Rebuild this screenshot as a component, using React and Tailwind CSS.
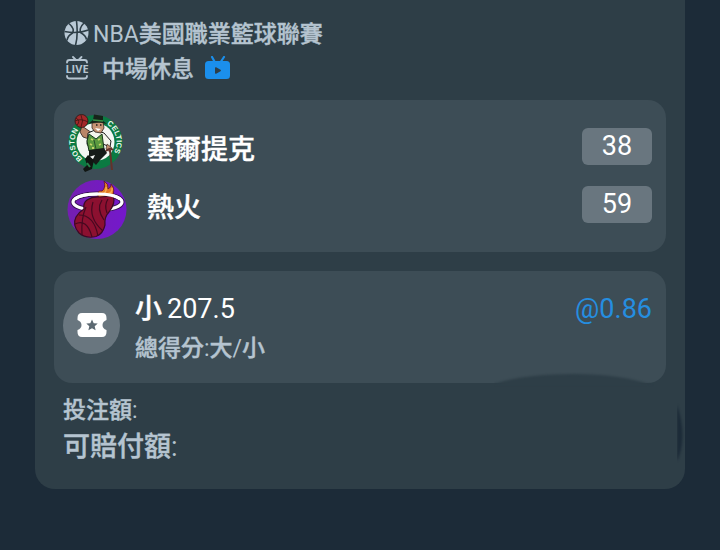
import React from "react";

function BasketballIcon() {
  return (
    <svg viewBox="0 0 26 26" className="size-[26px] shrink-0" aria-hidden="true">
      <circle cx="12.500" cy="12" r="12" fill="#b9c9d6" />
      <g fill="none" stroke="#2e3e47" strokeWidth="1.600">
        <path d="M0.500 10.500C8 12 18 11.500 24.500 9" />
        <path d="M12.500 0C13.500 8 13.500 17 11.500 24.500" />
        <path d="M5 2.500C9.500 6.500 10 9.500 8.500 12C6 13.500 3.500 15.500 3 19.500" />
        <path d="M20 2C16.500 5.500 15.500 8.500 16.500 11.500C20 13.500 22 15.500 22.500 18.500" />
      </g>
    </svg>
  );
}

function LiveIcon() {
  return (
    <svg viewBox="0 0 26 26" className="size-[26px] shrink-0" aria-hidden="true">
      <g fill="none" stroke="#b5c4d0" strokeWidth="1.800" strokeLinecap="round">
        <path d="M3 6.500V6.500Q3 4 5.500 4H20.500Q23 4 23 6.500V6.500" />
        <path d="M3 20V20Q3 22.500 5.500 22.500H20.500Q23 22.500 23 20V20" />
        <path d="M9 1L11.500 3.500M17.500 1L15 3.500" />
      </g>
      <text x="13" y="17" textAnchor="middle" fontSize="11" fontWeight="700" fill="#b5c4d0" className="font-['Open_Sans',sans-serif]">LIVE</text>
    </svg>
  );
}

function TvIcon() {
  return (
    <svg viewBox="0 0 26 26" className="size-[26px] shrink-0" aria-hidden="true">
      <rect x="0" y="5" width="25" height="18" rx="3.500" fill="#1b8fec" />
      <path d="M7 1L9.500 5.500M19 1L16 5.500" stroke="#1b8fec" strokeWidth="2.200" strokeLinecap="round" />
      <path d="M10 12.200Q10 10.800 11.100 11.300L15.500 13.700Q16.500 14.500 15.500 15.300L11.100 17.700Q10 18.200 10 16.800Z" fill="#2e3e47" />
    </svg>
  );
}

function CelticsLogo() {
  return (
    <svg viewBox="0 0 60 60" className="size-[60px] shrink-0" role="img" aria-label="Celtics">
      <defs>
        <path id="arcLeft" d="M16.500 46.200A21 21 0 0 1 16.500 11.800" />
        <path id="arcRight" d="M39 10.800A21 21 0 0 1 44 43.200" />
      </defs>
      <circle cx="28.500" cy="29" r="27" fill="#0b7a42" />
      <circle cx="28.500" cy="29" r="19" fill="#f4f7f4" />
      <g fill="#eef6f0" fontSize="7.500" fontWeight="700" className="font-['Liberation_Sans',sans-serif]">
        <text><textPath href="#arcLeft" startOffset="1">BOSTON</textPath></text>
        <text><textPath href="#arcRight" startOffset="1">CELTICS</textPath></text>
      </g>
      <g transform="translate(-2 0)">
        <path d="M17 13L15 19L18 24L24 26L27 20Z" fill="#b98568" stroke="#2b201b" strokeWidth="0.800" />
        <circle cx="16.500" cy="8" r="6.500" fill="#a3282a" stroke="#2d1614" strokeWidth="0.800" />
        <path d="M10 8Q16 5 23 9M16 2Q19 8 16 14M11 5Q16 8 12 12" fill="none" stroke="#3b1513" strokeWidth="0.800" />
        <path d="M23 20L30 17L39 20L46 28L45 34L38 31V37L27 39L22 31Z" fill="#f5f5ec" stroke="#202020" />
        <path d="M24 21L31 26L37 21L39 36L24 38L22 28Z" fill="#5b9a3f" stroke="#17371e" />
        <path d="M26 26l2 1M33 27l2-1M25 31l2 1M34 32l2-1M27 35h2" stroke="#c5d367" strokeWidth="1.800" />
        <path d="M29 27L31 36" stroke="#254f2a" />
        <path d="M24 37L39 35L42 40L36 46L31 52L27 48L30 42L24 44Z" fill="#151b18" />
        <path d="M23 42L29 47L27 56L20 59L18 56L22 52L20 46Z" fill="#101612" />
        <path d="M22 50L25 54" stroke="#27824a" strokeWidth="2" />
        <path d="M27 10L38 9L39 15L36 20L30 19L27 15Z" fill="#c79474" stroke="#33251c" strokeWidth="0.800" />
        <path d="M23 11L28 7L29 1.500L38 3L38 8L42 11L33 9Z" fill="#17231a" />
        <path d="M28 7L38 8" stroke="#3b8f45" strokeWidth="1.500" />
        <path d="M30 15L36 16L33 18Z" fill="#fff" />
        <path d="M31 12h1.500M35 12h1.500" stroke="#201b18" strokeWidth="1.500" />
        <path d="M42 31L47 35L45 39L41 36Z" fill="#c28c6d" stroke="#2b201b" strokeWidth="0.600" />
        <path d="M41 38Q45 34 48 37M45 37L47 57" fill="none" stroke="#64322a" strokeWidth="2" />
      </g>
    </svg>
  );
}

function HeatLogo() {
  return (
    <svg viewBox="0 0 60 60" className="size-[60px] shrink-0" role="img" aria-label="Heat">
      <defs>
        <linearGradient id="heatDisc" x1="0" x2="1">
          <stop offset="0" stopColor="#741fb0" />
          <stop offset="1" stopColor="#7418cc" />
        </linearGradient>
      </defs>
      <circle cx="30" cy="29.500" r="29.500" fill="url(#heatDisc)" />
      <ellipse cx="30.500" cy="22" rx="24.500" ry="8" fill="none" stroke="#35104c" strokeWidth="5" />
      <ellipse cx="30.500" cy="22" rx="24.500" ry="8" fill="none" stroke="#fff" strokeWidth="3.200" />
      <path d="M31 16Q30 10 35 11Q39 8 37 1Q42 4 41 9Q45 7 44 4Q49 10 45 16L43 22H34Z" fill="#e57a25" stroke="#5a1428" strokeWidth="0.800" />
      <path d="M36 14Q40 12 39 7M40 14Q46 13 45 8" fill="none" stroke="#f6b14c" strokeWidth="1.500" />
      <path d="M20 20Q26 16 33 17L46 16Q49 23 42 32Q37 37 38 45Q36 54 29 56.500Q19 59 12 53Q5 45 9 37Q12 32 17 29Q16 23 20 20Z" fill="#8c1030" stroke="#3b0a24" strokeWidth="1.200" />
      <g fill="none" stroke="#450920" strokeWidth="1.200">
        <path d="M8 44Q20 38 25 57" />
        <path d="M12 35Q27 35 31 56" />
        <path d="M19 27Q14 38 15 55" />
        <path d="M26 22Q21 38 36 51" />
        <path d="M35 20Q29 29 37 40" />
        <path d="M41 19Q37 25 40 33" />
      </g>
      <path d="M8 19Q14 14 30.500 14Q47 14 53 19" fill="none" stroke="#fff" strokeWidth="3.200" />
    </svg>
  );
}

function TicketIcon() {
  return (
    <span className="flex size-[57px] shrink-0 items-center justify-center rounded-full bg-[#69767f]">
      <svg viewBox="0 0 30 26" className="h-[26px] w-[30px]" aria-hidden="true">
        <path d="M5 1H25Q29.500 1 29.500 6V8Q25.500 9.500 25.500 13Q25.500 16.500 29.500 18V20Q29.500 25 25 25H5Q0.500 25 0.500 20V18Q4.500 16.500 4.500 13Q4.500 9.500 0.500 8V6Q0.500 1 5 1Z" fill="#fff" />
        <path d="M15 7.500L16.700 11.200L20.700 11.600L17.700 14.300L18.600 18.300L15 16.200L11.400 18.300L12.300 14.300L9.300 11.600L13.300 11.200Z" fill="#5c6972" />
      </svg>
    </span>
  );
}

function Han({ children }) {
  return <span className="font-medium [-webkit-text-stroke:0.4px]">{children}</span>;
}

const teams = [
  { name: "塞爾提克", score: 38, Logo: CelticsLogo },
  { name: "熱火", score: 59, Logo: HeatLogo },
];

export default function App() {
  return (
    <main className="min-h-screen bg-[#1c2b38] px-[35px] font-['Roboto','Noto_Sans_CJK_TC',sans-serif] text-[#b5c4d0]">
      <article className="relative rounded-b-[20px] bg-[#2e3e47] px-[19px] pt-4 pb-6">
        <header className="px-[10px] text-[23px]">
          <h1 className="flex h-[35px] items-center gap-[3px]">
            <BasketballIcon />
            <span className="pt-1">NBA<Han>美國職業籃球聯賽</Han></span>
          </h1>
          <div className="flex h-[35px] items-center">
            <LiveIcon />
            <span className="mr-[11px] ml-3 pt-1"><Han>中場休息</Han></span>
            <TvIcon />
          </div>
        </header>

        <section className="mt-[14px] flex h-[152px] items-center rounded-[18px] bg-[#3d4d56] pr-[14px] pl-[13px] text-[27px] text-white">
          <div className="flex flex-col gap-[7px]">
            {teams.map(({ name, Logo }) => <Logo key={name} />)}
          </div>
          <ul className="ml-5 flex-1 pb-[2px]">
            {teams.map(({ name, score }) => (
              <li key={name} className="flex h-[58px] items-center">
                <span className="flex-1 pt-2 leading-9"><Han>{name}</Han></span>
                <span className="flex h-[37px] w-[70px] items-center justify-center rounded-md bg-[#69767f]">{score}</span>
              </li>
            ))}
          </ul>
        </section>

        <section className="relative mt-[19px] flex h-28 items-center rounded-[18px] bg-[#3d4d56] pr-[14px] pb-1 pl-[9px]">
          <TicketIcon />
          <div className="ml-[15px] flex-1 pt-1">
            <div className="flex h-10 items-center justify-between pt-1 text-[27px]">
              <span className="flex items-center gap-[5px] text-white"><Han>小</Han><span>207.5</span></span>
              <span className="text-[#258ee0]">@0.86</span>
            </div>
            <p className="pt-1 text-[23px] leading-9"><Han>總得分</Han>:<Han>大</Han>/<Han>小</Han></p>
          </div>
          <svg viewBox="0 0 160 16" className="absolute right-[12px] bottom-[-4px] h-4 w-40" aria-hidden="true">
            <path d="M0 13Q30 3 80 3Q125 3 158 14V16H0Z" fill="#2e3e47" className="blur-[1px]" />
          </svg>
        </section>

        <footer className="mt-[10px] px-[9px]">
          <p className="h-9 text-[23px] leading-9"><Han>投注額</Han>:</p>
          <p className="h-9 text-[27px] leading-9"><Han>可賠付額</Han>:</p>
        </footer>
        <svg viewBox="0 0 8 64" className="absolute right-0 bottom-6 h-16 w-2" aria-hidden="true">
          <path d="M0 4Q7 24 5 42Q4 52 0 60Z" fill="#1c2b38" className="blur-[1px]" />
        </svg>
      </article>
    </main>
  );
}
